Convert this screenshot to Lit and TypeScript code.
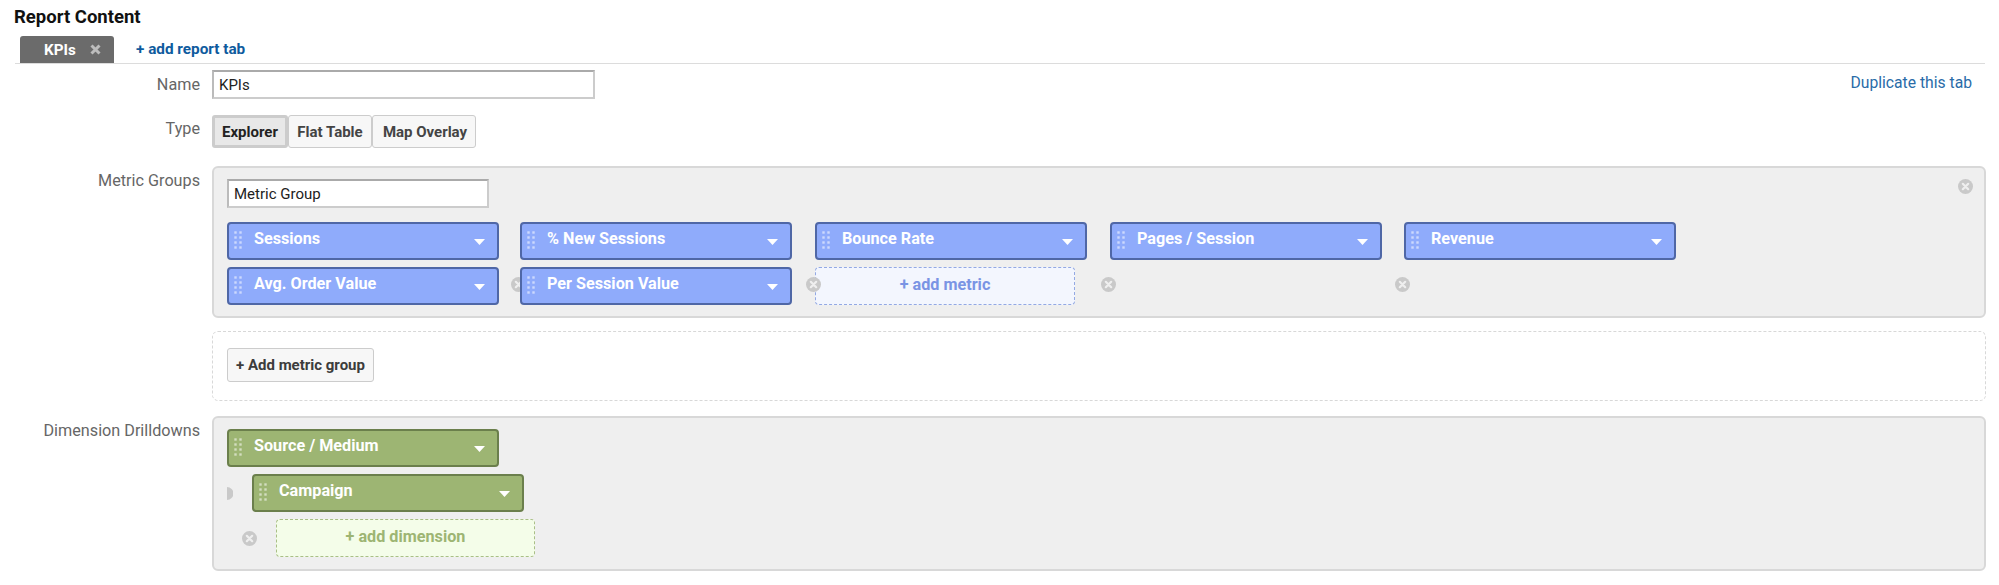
import { LitElement, html, css, svg } from "lit";
import { customElement } from "lit/decorators.js";

const grip = html`<svg class="grip" width="8" height="18" viewBox="0 0 8 18">
  ${[1.5, 6.5].map((x) => [1.5, 6.5, 11.5, 16.5].map((y) => svg`<rect x="${x - 1.2}" y="${y - 1.2}" width="2.4" height="2.4" fill="#fff" fill-opacity=".55"/>`))}
</svg>`;

const caret = html`<svg class="caret" width="11" height="6" viewBox="0 0 11 6"><path d="M0 0H11L5.5 6Z" fill="#fff"/></svg>`;

const closeDot = html`<svg class="dot-svg" width="15" height="15" viewBox="0 0 15 15">
  <circle cx="7.5" cy="7.5" r="7.5" fill="#c9c9c9"/>
  <path d="M4.8 4.8L10.2 10.2M10.2 4.8L4.8 10.2" stroke="#efefef" stroke-width="2.2" stroke-linecap="round"/>
</svg>`;

const chip = (label: string, kind: string) => html`<div class="chip ${kind}">
  ${grip}<span class="chip-label">${label}</span>${caret}
</div>`;

@customElement("app-root")
export class AppRoot extends LitElement {
  static styles = css`
    :host { display: block; width: 1999px; height: 585px; overflow: hidden; background: #fff; font-family: Roboto, "Liberation Sans", sans-serif; color: #333; box-sizing: border-box; }
    * { box-sizing: border-box; }
    .title { height: 36px; padding: 7px 0 0 14px; font-size: 18.5px; line-height: 20px; font-weight: 700; color: #111; }
    .tabs { display: flex; align-items: stretch; height: 28px; margin: 0 14px 0 15px; padding-left: 5px; border-bottom: 1.5px solid #dcdcdc; }
    .tab { display: flex; align-items: center; width: 94px; height: 27px; padding-left: 24px; background: #6b6b6b; border-radius: 3px 3px 0 0; color: #fff; font-size: 15.2px; font-weight: 700; }
    .tab svg { margin-left: 14px; }
    .add-tab { margin-left: 22px; line-height: 26px; font-size: 15.3px; font-weight: 700; color: #0f5b9e; }
    .row { display: grid; grid-template-columns: 200px 1fr; column-gap: 12px; width: 1986px; }
    .label { text-align: right; font-size: 16.2px; color: #666; }
    .name-row { margin-top: 6px; height: 29px; }
    .name-row .label { line-height: 29px; }
    .name-body { display: flex; align-items: center; justify-content: space-between; padding-right: 14px; }
    .link { font-size: 15.7px; color: #2a6ca8; position: relative; top: -2px; }
    .input { height: 29px; border: 2px solid #ccc; border-top-color: #aaa; border-left-color: #bbb; background: #fff; padding-left: 5px; font-size: 15px; line-height: 26px; color: #222; }
    .name-input { width: 383px; }
    .type-row { margin-top: 16px; height: 33px; }
    .type-row .label { line-height: 27px; }
    .seg { display: flex; width: 264px; height: 33px; }
    .seg-btn { height: 33px; display: flex; align-items: center; justify-content: center; background: #f7f7f7; border: 1.5px solid #ccc; border-radius: 3px; font-size: 15px; font-weight: 700; color: #444; }
    .seg-btn.on { background: #e8e8e8; border-width: 3px; border-color: #ccc; color: #222; }
    .s1 { width: 76px; } .s2 { width: 84px; } .s3 { width: 104px; padding-left: 2px; }
    .metric-row { margin-top: 18px; }
    .metric-row .label { padding-top: 5px; line-height: 20px; }
    .panel { position: relative; background: #efefef; border: 2px solid #d8d8d8; border-radius: 6px; padding: 11px 13px 0; }
    .metric-panel { height: 152px; }
    .group-input { width: 262px; margin-bottom: 14px; }
    .chips { display: grid; grid-template-columns: 293px 295px 295px 294px 272px; row-gap: 7px; }
    .cell { position: relative; height: 38px; width: 272px; }
    .dot { position: absolute; left: -9px; top: 10px; width: 15px; height: 15px; line-height: 0; }
    .chip { position: relative; display: flex; align-items: center; width: 272px; height: 38px; border-radius: 4px; border: 2px solid; padding-left: 5px; color: #fff; font-size: 16.2px; font-weight: 700; }
    .chip.blue { background: #8fabfb; border-color: #4f67a6; }
    .chip.green { background: #9db573; border-color: #6b7f4c; }
    .grip { flex: none; margin-top: -2px; }
    .chip-label { margin-left: 12px; flex: 1; position: relative; top: -3px; }
    .caret { flex: none; margin-right: 12px; margin-top: 2px; }
    .add { display: flex; align-items: center; justify-content: center; height: 38px; padding-bottom: 3px; border-radius: 4px; border: 1.5px dashed; font-size: 16.2px; font-weight: 700; }
    .add.blue { width: 260px; background: #f3f6fe; border-color: #93a9e4; color: #7a94e4; }
    .add.green { width: 259px; background: #f4fde9; border-color: #a9bf86; color: #9db573; }
    .close-panel { position: absolute; right: 11px; top: 11px; line-height: 0; }
    .group-row { margin-top: 13px; }
    .dashed { height: 70px; border: 1.5px dashed #d8d8d8; border-radius: 6px; padding: 16px 14px; }
    .add-group { display: flex; align-items: center; justify-content: center; width: 147px; height: 34px; background: #f7f7f7; border: 1.5px solid #ccc; border-radius: 3px; font-size: 15px; font-weight: 700; color: #3c3c3c; }
    .dim-row { margin-top: 15px; }
    .dim-row .label { padding-top: 5px; line-height: 20px; }
    .dim-panel { height: 155px; display: flex; flex-direction: column; gap: 7px; }
    .nest { position: relative; }
    .nest-1 { margin-left: 25px; }
    .nest-2 { margin-left: 49px; }
    .half { position: absolute; left: -25px; top: 13px; line-height: 0; }
    .nest-dot { position: absolute; left: -34px; top: 12px; line-height: 0; }
  `;

  render() {
    return html`
      <div class="title">Report Content</div>
      <div class="tabs">
        <div class="tab">KPIs<svg width="11" height="11" viewBox="0 0 11 11"><path d="M1.5 1.5L9.5 9.5M9.5 1.5L1.5 9.5" stroke="#bdbdbd" stroke-width="3"/></svg></div>
        <div class="add-tab">+ add report tab</div>
      </div>
      <div class="row name-row">
        <div class="label">Name</div>
        <div class="name-body">
          <div class="input name-input">KPIs</div>
          <div class="link">Duplicate this tab</div>
        </div>
      </div>
      <div class="row type-row">
        <div class="label">Type</div>
        <div class="seg">
          <div class="seg-btn on s1">Explorer</div>
          <div class="seg-btn s2">Flat Table</div>
          <div class="seg-btn s3">Map Overlay</div>
        </div>
      </div>
      <div class="row metric-row">
        <div class="label">Metric Groups</div>
        <div class="panel metric-panel">
          <div class="input group-input">Metric Group</div>
          <div class="chips">
            <div class="cell">${chip("Sessions", "blue")}</div>
            <div class="cell">${chip("% New Sessions", "blue")}</div>
            <div class="cell">${chip("Bounce Rate", "blue")}</div>
            <div class="cell">${chip("Pages / Session", "blue")}</div>
            <div class="cell">${chip("Revenue", "blue")}</div>
            <div class="cell">${chip("Avg. Order Value", "blue")}</div>
            <div class="cell"><div class="dot">${closeDot}</div>${chip("Per Session Value", "blue")}</div>
            <div class="cell"><div class="dot">${closeDot}</div><div class="add blue">+ add metric</div></div>
            <div class="cell"><div class="dot">${closeDot}</div></div>
            <div class="cell"><div class="dot">${closeDot}</div></div>
          </div>
          <div class="close-panel">${closeDot}</div>
        </div>
      </div>
      <div class="row group-row">
        <div></div>
        <div class="dashed"><div class="add-group">+ Add metric group</div></div>
      </div>
      <div class="row dim-row">
        <div class="label">Dimension Drilldowns</div>
        <div class="panel dim-panel">
          ${chip("Source / Medium", "green")}
          <div class="nest nest-1">
            <div class="half"><svg width="6" height="13" viewBox="0 0 6 13"><path d="M0 0A6.5 6.5 0 0 1 0 13Z" fill="#c9c9c9"/></svg></div>
            ${chip("Campaign", "green")}
          </div>
          <div class="nest nest-2">
            <div class="nest-dot">${closeDot}</div>
            <div class="add green">+ add dimension</div>
          </div>
        </div>
      </div>
    `;
  }
}
